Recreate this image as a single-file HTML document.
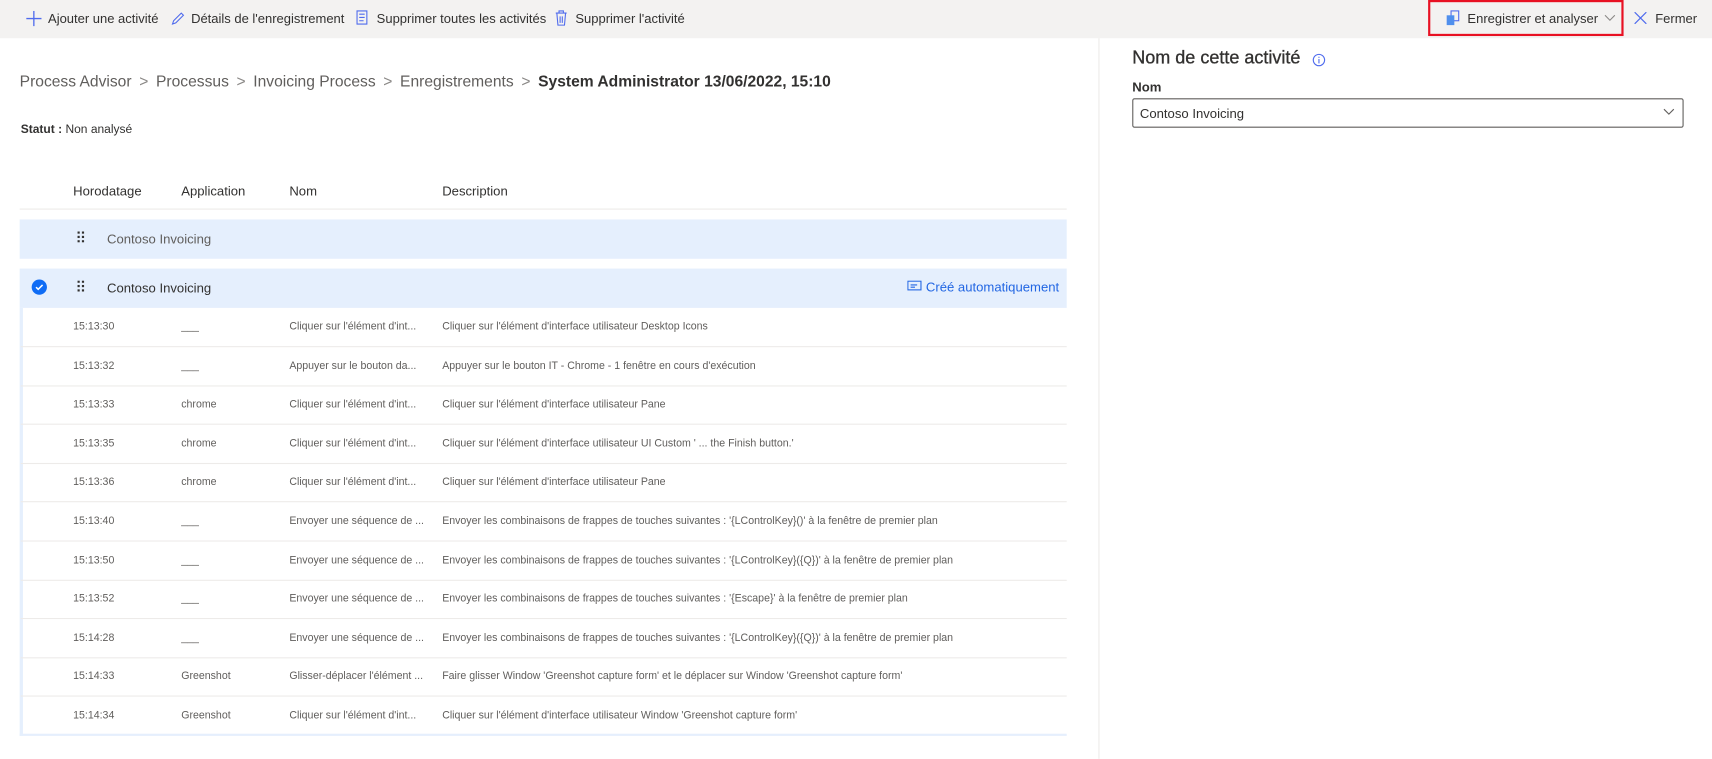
<!DOCTYPE html>
<html><head><meta charset="utf-8"><style>
*{box-sizing:border-box;margin:0;padding:0}
body{width:1712px;height:754px;background:#fff;font-family:"Liberation Sans",sans-serif;color:#323130;position:relative;overflow:hidden}
#w{position:absolute;left:0;top:0;width:1568px;height:691px;transform:scale(1.09184);transform-origin:0 0}
.tb{position:absolute;left:0;top:0;width:1568px;height:35px;background:#f3f2f1}
.ti{position:absolute;top:10px;font-size:11.9px;color:#323130;white-space:nowrap}
.ab{position:absolute;white-space:nowrap}
.bc{top:67px;left:18px;font-size:14.3px;color:#605e5c}
.bc b{color:#323130}
.sep{margin:0 7px;color:#8a8886}
.hdr{font-size:12px;color:#323130;top:168px}
.grp{position:absolute;left:18px;width:959px;background:#e5effd}
.row{position:absolute;left:19px;width:958px;height:36px;border-bottom:1px solid #edebe9;font-size:9.7px;color:#605e5c}
.row span{position:absolute;top:12px;white-space:nowrap}
</style></head><body><div id="w">
<div class="tb"></div>
<svg class="ab" style="left:24px;top:10px" width="14" height="14"><path d="M7 0v14M0 7h14" stroke="#4f6bed" stroke-width="1.2"/></svg>
<div class="ti" style="left:44px">Ajouter une activité</div>
<svg class="ab" style="left:156px;top:10px" width="14" height="14"><path d="M2 12l1-3 7-7 2 2-7 7z" fill="none" stroke="#4f6bed" stroke-width="1"/></svg>
<div class="ti" style="left:175px">Détails de l'enregistrement</div>
<svg class="ab" style="left:326px;top:9px" width="13" height="15"><path d="M1 1h9v12H1zM3 4h5M3 7h5M3 10h4" fill="none" stroke="#4f6bed" stroke-width="1"/></svg>
<div class="ti" style="left:345px">Supprimer toutes les activités</div>
<svg class="ab" style="left:508px;top:9px" width="12" height="15"><path d="M1 3h10M4 3V1h4v2M2 3l1 11h6l1-11M5 6v6M7 6v6" fill="none" stroke="#4f6bed" stroke-width="1"/></svg>
<div class="ti" style="left:527px">Supprimer l'activité</div>
<div class="ab" style="left:1308px;top:0;width:179px;height:33px;border:2px solid #e81123"></div>
<svg class="ab" style="left:1324px;top:9px" width="14" height="15"><rect x="5" y="1" width="7" height="9" fill="none" stroke="#4f6bed"/><rect x="1" y="5" width="7" height="9" fill="#4f8fed"/></svg>
<div class="ti" style="left:1344px">Enregistrer et analyser</div>
<svg class="ab" style="left:1469px;top:13px" width="11" height="7"><path d="M1 1l4.5 4.5L10 1" fill="none" stroke="#8a8886"/></svg>
<svg class="ab" style="left:1497px;top:11px" width="11" height="11"><path d="M0 0l11 11M11 0L0 11" stroke="#4f6bed" stroke-width="1.1"/></svg>
<div class="ti" style="left:1516px">Fermer</div>

<div class="ab" style="left:1006px;top:35px;width:1px;height:660px;background:#edebe9"></div>

<div class="ab bc">Process Advisor<span class="sep">&gt;</span>Processus<span class="sep">&gt;</span>Invoicing Process<span class="sep">&gt;</span>Enregistrements<span class="sep">&gt;</span><b>System Administrator 13/06/2022, 15:10</b></div>
<div class="ab" style="left:19px;top:113px;font-size:11px"><b>Statut :</b> Non analysé</div>

<div class="ab hdr" style="left:67px">Horodatage</div>
<div class="ab hdr" style="left:166px">Application</div>
<div class="ab hdr" style="left:265px">Nom</div>
<div class="ab hdr" style="left:405px">Description</div>
<div class="ab" style="left:18px;top:191px;width:959px;height:1px;background:#edebe9"></div>

<div class="grp" style="top:201px;height:36px"></div>
<svg class="ab" style="left:71px;top:212px" width="7" height="10"><g fill="#323130"><rect x="0" y="0" width="2" height="2"/><rect x="4" y="0" width="2" height="2"/><rect x="0" y="4" width="2" height="2"/><rect x="4" y="4" width="2" height="2"/><rect x="0" y="8" width="2" height="2"/><rect x="4" y="8" width="2" height="2"/></g></svg>
<div class="ab" style="left:98px;top:212px;font-size:12px;color:#605e5c">Contoso Invoicing</div>

<div class="grp" style="top:246px;height:36px"></div>
<div class="ab" style="left:29px;top:256px;width:14px;height:14px;border-radius:50%;background:#0f6cf5"></div>
<svg class="ab" style="left:32px;top:259px" width="8" height="8"><path d="M1 4l2 2 4-4" fill="none" stroke="#fff" stroke-width="1.4"/></svg>
<svg class="ab" style="left:71px;top:257px" width="7" height="10"><g fill="#323130"><rect x="0" y="0" width="2" height="2"/><rect x="4" y="0" width="2" height="2"/><rect x="0" y="4" width="2" height="2"/><rect x="4" y="4" width="2" height="2"/><rect x="0" y="8" width="2" height="2"/><rect x="4" y="8" width="2" height="2"/></g></svg>
<div class="ab" style="left:98px;top:257px;font-size:12px;color:#323130">Contoso Invoicing</div>
<svg class="ab" style="left:831px;top:257px" width="14" height="12"><rect x="0.5" y="0.5" width="12" height="8" fill="none" stroke="#2266e3"/><path d="M3 4h6M3 6h4" stroke="#2266e3"/></svg>
<div class="ab" style="left:848px;top:256px;font-size:12px;color:#2266e3">Créé automatiquement</div>

<div class="ab" style="left:18px;top:282px;width:3px;height:392px;background:#e5effd"></div>
<div class="ab" style="left:18px;top:672px;width:959px;height:2px;background:#e5effd"></div>

<div class="row" style="top:282px"><span style="left:48px">15:13:30</span><span style="left:147px">___</span><span style="left:246px">Cliquer sur l'élément d'int...</span><span style="left:386px">Cliquer sur l'élément d'interface utilisateur Desktop Icons</span></div>
<div class="row" style="top:318px"><span style="left:48px">15:13:32</span><span style="left:147px">___</span><span style="left:246px">Appuyer sur le bouton da...</span><span style="left:386px">Appuyer sur le bouton IT - Chrome - 1 fenêtre en cours d'exécution</span></div>
<div class="row" style="top:353px"><span style="left:48px">15:13:33</span><span style="left:147px">chrome</span><span style="left:246px">Cliquer sur l'élément d'int...</span><span style="left:386px">Cliquer sur l'élément d'interface utilisateur Pane</span></div>
<div class="row" style="top:389px"><span style="left:48px">15:13:35</span><span style="left:147px">chrome</span><span style="left:246px">Cliquer sur l'élément d'int...</span><span style="left:386px">Cliquer sur l'élément d'interface utilisateur UI Custom ' ... the Finish button.'</span></div>
<div class="row" style="top:424px"><span style="left:48px">15:13:36</span><span style="left:147px">chrome</span><span style="left:246px">Cliquer sur l'élément d'int...</span><span style="left:386px">Cliquer sur l'élément d'interface utilisateur Pane</span></div>
<div class="row" style="top:460px"><span style="left:48px">15:13:40</span><span style="left:147px">___</span><span style="left:246px">Envoyer une séquence de ...</span><span style="left:386px">Envoyer les combinaisons de frappes de touches suivantes : '{LControlKey}()' à la fenêtre de premier plan</span></div>
<div class="row" style="top:496px"><span style="left:48px">15:13:50</span><span style="left:147px">___</span><span style="left:246px">Envoyer une séquence de ...</span><span style="left:386px">Envoyer les combinaisons de frappes de touches suivantes : '{LControlKey}({Q})' à la fenêtre de premier plan</span></div>
<div class="row" style="top:531px"><span style="left:48px">15:13:52</span><span style="left:147px">___</span><span style="left:246px">Envoyer une séquence de ...</span><span style="left:386px">Envoyer les combinaisons de frappes de touches suivantes : '{Escape}' à la fenêtre de premier plan</span></div>
<div class="row" style="top:567px"><span style="left:48px">15:14:28</span><span style="left:147px">___</span><span style="left:246px">Envoyer une séquence de ...</span><span style="left:386px">Envoyer les combinaisons de frappes de touches suivantes : '{LControlKey}({Q})' à la fenêtre de premier plan</span></div>
<div class="row" style="top:602px"><span style="left:48px">15:14:33</span><span style="left:147px">Greenshot</span><span style="left:246px">Glisser-déplacer l'élément ...</span><span style="left:386px">Faire glisser Window 'Greenshot capture form' et le déplacer sur Window 'Greenshot capture form'</span></div>
<div class="row" style="top:638px;border-bottom:none"><span style="left:48px">15:14:34</span><span style="left:147px">Greenshot</span><span style="left:246px">Cliquer sur l'élément d'int...</span><span style="left:386px">Cliquer sur l'élément d'interface utilisateur Window 'Greenshot capture form'</span></div>

<div class="ab" style="left:1037px;top:44px;font-size:16.5px;color:#323130;-webkit-text-stroke:0.3px #323130">Nom de cette activité</div>
<svg class="ab" style="left:1202px;top:49px" width="12" height="12"><circle cx="6" cy="6" r="5.2" fill="none" stroke="#4f6bed"/><path d="M6 5v4M6 3v1" stroke="#4f6bed"/></svg>
<div class="ab" style="left:1037px;top:73px;font-size:12px;font-weight:bold;color:#323130">Nom</div>
<div class="ab" style="left:1037px;top:90px;width:505px;height:27px;border:1px solid #605e5c;border-radius:2px"></div>
<div class="ab" style="left:1044px;top:97px;font-size:12px">Contoso Invoicing</div>
<svg class="ab" style="left:1523px;top:99px" width="11" height="7"><path d="M1 1l4.5 4.5L10 1" fill="none" stroke="#605e5c"/></svg>
</div></body></html>
